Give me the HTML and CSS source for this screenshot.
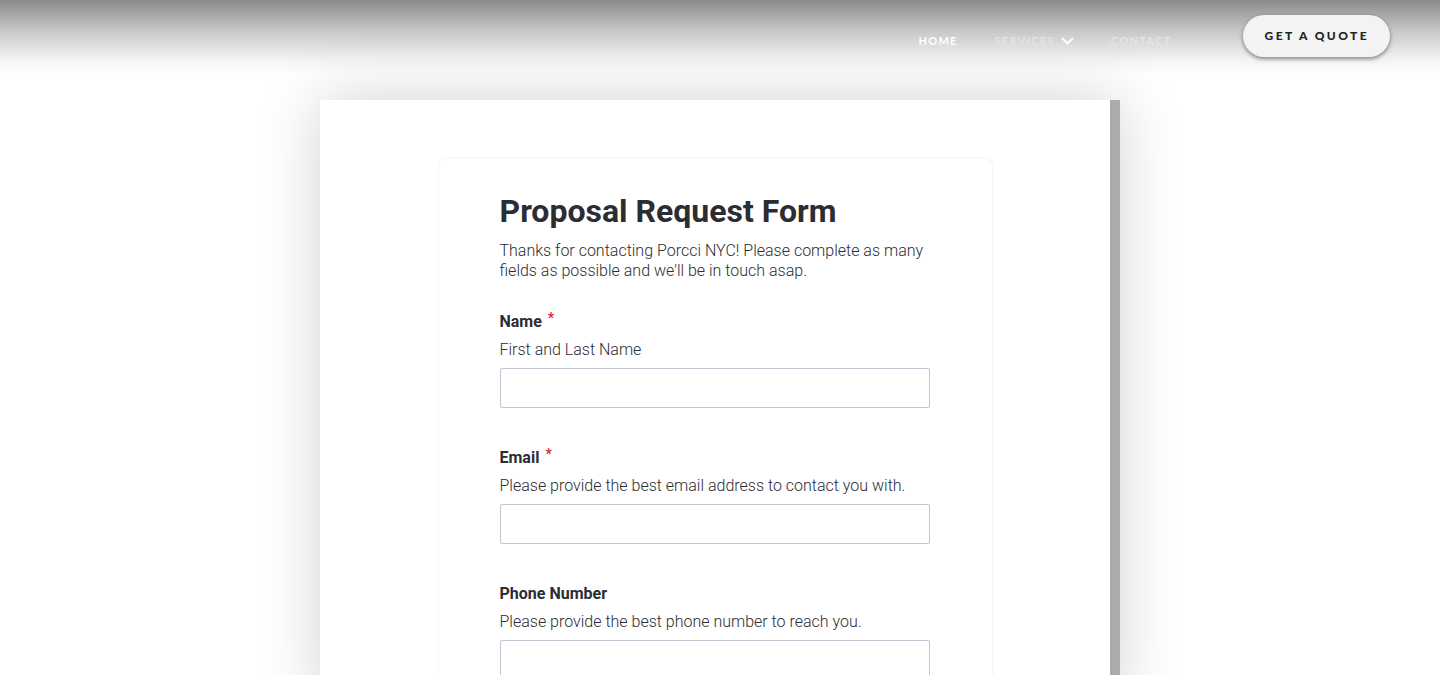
FILE: index.html
```html
<!DOCTYPE html>
<html lang="en">

<head>
    <meta charset="UTF-8">
    <meta name="viewport" content="width=device-width, initial-scale=1.0">
    <title>Proposal Request Form</title>
    <link rel="stylesheet" href="styles.css">
</head>

<body>
    <header class="topbar">
        <nav class="menu">
            <a href="#" class="menu-link current">Home</a>
            <a href="#" class="menu-link muted">Services
                <svg class="chevron" width="13" height="8" viewBox="0 0 13 8">
                    <path d="M1 1l5.5 5.5L12 1" fill="none" stroke="#fff" stroke-width="1.8" />
                </svg>
            </a>
            <a href="#" class="menu-link muted">Contact</a>
        </nav>
        <a href="#" class="quote-btn">Get a Quote</a>
    </header>

    <main class="stage">
        <div class="frame">
            <div class="frame-body">
                <form class="card">
                    <h1 class="card-title">Proposal Request Form</h1>
                    <p class="card-intro">Thanks for contacting Porcci NYC! Please complete as many fields as possible and we'll be in touch asap.</p>

                    <div class="field">
                        <label class="field-label" for="name">Name <span class="req">*</span></label>
                        <p class="field-hint">First and Last Name</p>
                        <input type="text" id="name" class="field-input">
                    </div>

                    <div class="field">
                        <label class="field-label" for="email">Email <span class="req">*</span></label>
                        <p class="field-hint">Please provide the best email address to contact you with.</p>
                        <input type="email" id="email" class="field-input">
                    </div>

                    <div class="field">
                        <label class="field-label" for="phone">Phone Number</label>
                        <p class="field-hint">Please provide the best phone number to reach you.</p>
                        <input type="tel" id="phone" class="field-input">
                    </div>
                </form>
            </div>
            <div class="scroll-track"></div>
        </div>
    </main>
</body>

</html>
```

FILE: styles.css
```css
html, body {
    height: 100%;
}

body {
    background-color: #fff;
    font-family: Roboto, "Liberation Sans", sans-serif;
    margin: 0;
    overflow: hidden;
}

.topbar {
    align-items: center;
    background: linear-gradient(to bottom, #8a8a8a 0%, #c6c6c6 40%, #f4f4f4 80%, #fff 100%);
    box-sizing: border-box;
    display: flex;
    height: 75px;
    justify-content: flex-end;
    padding: 0 50px 4px 0;
}

.menu {
    align-items: center;
    display: flex;
    gap: 37px;
    margin-right: 71px;
    padding-top: 10px;
}

.menu-link {
    align-items: center;
    display: flex;
    font-family: Lato, "Liberation Sans", sans-serif;
    font-size: 11px;
    font-weight: 700;
    gap: 6px;
    letter-spacing: 1.3px;
    text-decoration: none;
    text-transform: uppercase;
}

.current {
    color: #fff;
}

.muted {
    color: #e4e4e4;
}

.quote-btn {
    background-color: #f3f3f3;
    border-radius: 22px;
    box-shadow: 0 2px 4px rgba(0, 0, 0, 0.45);
    color: #222;
    font-family: Lato, "Liberation Sans", sans-serif;
    font-size: 12px;
    font-weight: 900;
    letter-spacing: 2.4px;
    line-height: 42px;
    padding: 0 21px 0 22px;
    text-decoration: none;
    text-transform: uppercase;
}

.stage {
    display: flex;
    justify-content: center;
    padding-top: 25px;
}

.frame {
    box-shadow: 0 0 60px rgba(0, 0, 0, 0.18);
    display: flex;
    height: 600px;
    width: 800px;
}

.frame-body {
    background-color: #fff;
    flex: 1;
    padding-top: 59px;
}

.scroll-track {
    background-color: #ababab;
    width: 10px;
}

.card {
    border-radius: 8px;
    box-shadow: 0 0 3px rgba(0, 0, 0, 0.1);
    box-sizing: border-box;
    margin: 0 auto;
    min-height: 600px;
    padding: 34px 62px 0 61px;
    width: 553px;
}

.card-title {
    color: #2c2c33;
    font-size: 32px;
    font-weight: 700;
    line-height: 36px;
    margin: 0 0 12px;
}

.card-intro {
    color: #2c2c33;
    font-size: 16px;
    font-weight: 300;
    line-height: 20px;
    margin: 0 0 31px;
}

.field {
    margin-bottom: 40px;
}

.field-label {
    color: #2c2c33;
    display: block;
    font-size: 16px;
    font-weight: 700;
    line-height: 20px;
}

.req {
    color: #e0273b;
    font-size: 14px;
    margin-left: 2px;
    position: relative;
    top: -4px;
}

.field-hint {
    color: #2c2c33;
    font-size: 16px;
    font-weight: 300;
    line-height: 20px;
    margin: 8px 0 8px;
}

.field-input {
    border: 1px solid #c3c3d1;
    border-radius: 2px;
    box-sizing: border-box;
    display: block;
    height: 40px;
    width: 100%;
}
```
